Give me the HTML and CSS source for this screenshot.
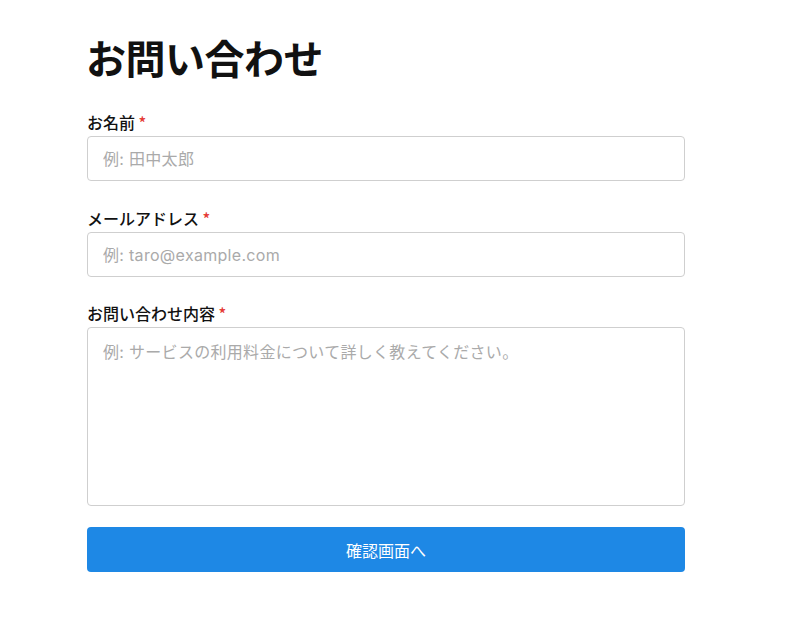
FILE: index.html
```html
<!DOCTYPE html>
<html lang="ja">
<head>
<meta charset="utf-8">
<title>お問い合わせ</title>
<link rel="stylesheet" href="styles.css">
</head>
<body>
<main class="page">
  <h1 class="title">お問い合わせ</h1>
  <form class="form">
    <div class="field">
      <label class="label" for="name">お名前 <span class="req">*</span></label>
      <input class="input" id="name" type="text" placeholder="例: 田中太郎">
    </div>
    <div class="field field-tight">
      <label class="label" for="email">メールアドレス <span class="req">*</span></label>
      <input class="input" id="email" type="email" placeholder="例: taro@example.com">
    </div>
    <div class="field field-last">
      <label class="label" for="msg">お問い合わせ内容 <span class="req">*</span></label>
      <textarea class="input textarea" id="msg" placeholder="例: サービスの利用料金について詳しく教えてください。"></textarea>
    </div>
    <button class="btn" type="button">確認画面へ</button>
  </form>
</main>
</body>
</html>
```

FILE: styles.css
```css
* { box-sizing: border-box; }
html, body { margin: 0; padding: 0; background: #fff; }
body {
  font-family: "Noto Sans CJK JP", "Noto Sans", "Liberation Sans", sans-serif;
  color: #111;
}
.page {
  width: 598px;
  margin-left: 87px;
  padding-top: 33px;
}
.title {
  margin: 0 0 29px;
  font-size: 40px;
  line-height: 48px;
  font-weight: 700;
  letter-spacing: -0.5px;
  margin-left: -1px;
}
.form { display: flex; flex-direction: column; }
.field { display: flex; flex-direction: column; margin-bottom: 25px; }
.field-tight { margin-bottom: 24px; }
.field-last { margin-bottom: 21px; }
.label {
  font-size: 16px;
  line-height: 24px;
  margin-bottom: 2px;
  font-weight: 500;
}
.req { color: #e53935; }
.input {
  width: 100%;
  height: 45px;
  border: 1px solid #cfcfcf;
  border-radius: 4px;
  padding: 0 15px;
  font-family: Inter, "Noto Sans CJK JP", sans-serif;
  font-size: 16px;
  letter-spacing: 0.3px;
  color: #222;
  background: #fff;
}
.input::placeholder { color: #aaa; }
.textarea {
  height: 179px;
  padding: 12px 15px;
  resize: none;
  line-height: 24px;
}
.btn {
  height: 45px;
  border: none;
  border-radius: 4px;
  background: #1e88e5;
  color: #fff;
  font-family: "Noto Sans CJK JP", sans-serif;
  font-size: 16px;
}
```
